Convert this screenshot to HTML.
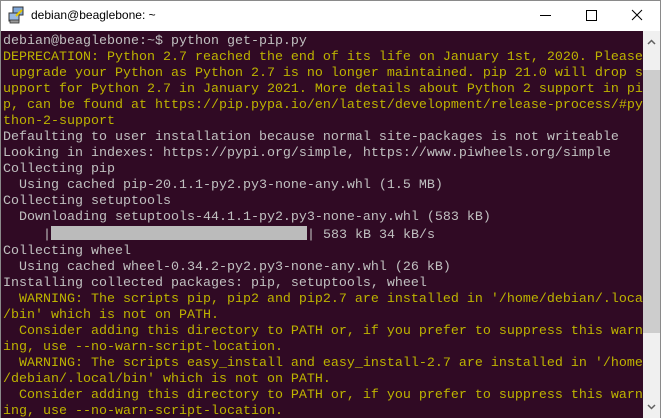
<!DOCTYPE html>
<html><head><meta charset="utf-8"><style>
*{margin:0;padding:0;box-sizing:border-box}
body{width:661px;height:418px;overflow:hidden;background:#fff;position:relative;font-family:"Liberation Sans",sans-serif}
.frame{position:absolute;left:0;top:0;width:661px;height:418px;border:1px solid #8a8a8a;border-bottom:none}
.title{position:absolute;left:31px;top:8px;font-size:12px;color:#000}
.term{position:absolute;left:1px;top:31px;width:642px;height:387px;background:#300a24;overflow:hidden}
pre{font-family:"Liberation Mono",monospace;font-size:13.33px;line-height:16px;color:#c0c0c0;position:absolute;left:2px;top:3px;white-space:pre}
.y{color:#bdb300}
.bar{display:inline-block;width:256px;height:14px;background:#bbb;vertical-align:-2px}
.sb{position:absolute;left:643px;top:31px;width:17px;height:387px;background:#f0f0f0}
.thumb{position:absolute;left:643px;top:70px;width:17px;height:263px;background:#cdcdcd}
</style></head><body>
<div class="frame"></div>
<svg style="position:absolute;left:8px;top:6px" width="18" height="18" viewBox="0 0 18 18">
<rect x="5" y="1" width="10" height="8" fill="#7fa7d8" stroke="#333" stroke-width="1"/>
<rect x="1" y="7" width="10" height="8" fill="#9ab8e0" stroke="#333" stroke-width="1"/>
<rect x="2" y="14" width="9" height="3" fill="#999" stroke="#333" stroke-width="0.8"/>
<path d="M8 10 L14 4" stroke="#e6c800" stroke-width="2"/>
</svg>
<div class="title">debian@beaglebone: ~</div>
<svg style="position:absolute;left:538px;top:8px" width="110" height="16" viewBox="0 0 110 16">
<path d="M2 7.5H13" stroke="#000" stroke-width="1"/>
<rect x="48.5" y="2.5" width="10" height="10" fill="none" stroke="#000" stroke-width="1"/>
<path d="M94 2L104 12M104 2L94 12" stroke="#000" stroke-width="1"/>
</svg>
<div class="term"><pre>debian@beaglebone:~$ python get-pip.py
<span class="y">DEPRECATION: Python 2.7 reached the end of its life on January 1st, 2020. Please
 upgrade your Python as Python 2.7 is no longer maintained. pip 21.0 will drop s
upport for Python 2.7 in January 2021. More details about Python 2 support in pi
p, can be found at https://pip.pypa.io/en/latest/development/release-process/#py
thon-2-support</span>
Defaulting to user installation because normal site-packages is not writeable
Looking in indexes: https://pypi.org/simple, https://www.piwheels.org/simple
Collecting pip
  Using cached pip-20.1.1-py2.py3-none-any.whl (1.5 MB)
Collecting setuptools
  Downloading setuptools-44.1.1-py2.py3-none-any.whl (583 kB)
     |<span class="bar"></span>| 583 kB 34 kB/s
Collecting wheel
  Using cached wheel-0.34.2-py2.py3-none-any.whl (26 kB)
Installing collected packages: pip, setuptools, wheel
<span class="y">  WARNING: The scripts pip, pip2 and pip2.7 are installed in '/home/debian/.local
/bin' which is not on PATH.
  Consider adding this directory to PATH or, if you prefer to suppress this warn
ing, use --no-warn-script-location.
  WARNING: The scripts easy_install and easy_install-2.7 are installed in '/home
/debian/.local/bin' which is not on PATH.
  Consider adding this directory to PATH or, if you prefer to suppress this warn
ing, use --no-warn-script-location.</span></pre></div>
<div class="sb"></div>
<div class="thumb"></div>
<svg style="position:absolute;left:643px;top:33px" width="17" height="385" viewBox="0 0 17 385">
<path d="M5 11L8.5 7.5L12 11" fill="none" stroke="#606060" stroke-width="1.5"/>
<path d="M5 372L8.5 375.5L12 372" fill="none" stroke="#606060" stroke-width="1.5"/>
</svg>
</body></html>
